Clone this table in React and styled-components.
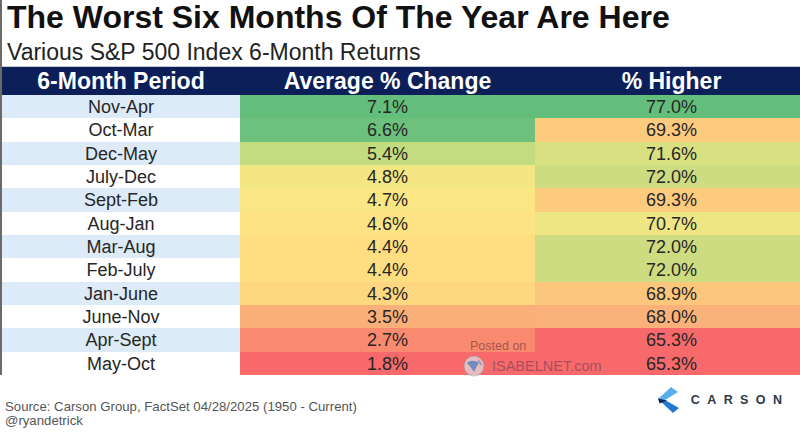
import styled, { createGlobalStyle } from "styled-components";

const GlobalStyle = createGlobalStyle`
  html, body {
    margin: 0;
    padding: 0;
    background: #fff;
  }
  body {
    font-family: "Liberation Sans", Arial, sans-serif;
  }
`;

const Page = styled.div`
  position: relative;
  width: 800px;
  height: 435px;
  overflow: hidden;
  background: #fff;
`;

const Sheet = styled.div`
  border-left: 2px solid #6a6a6a;
`;

const Title = styled.h1`
  margin: 0;
  padding-left: 5px;
  font-size: 32px;
  line-height: 34px;
  font-weight: 700;
  color: #111;
  white-space: nowrap;
`;

const Subtitle = styled.div`
  margin-top: 5px;
  padding-left: 5px;
  height: 27px;
  font-size: 23px;
  line-height: 26px;
  color: #222;
  white-space: nowrap;
`;

const Grid = styled.div`
  display: grid;
  grid-template-columns: 238px 295px 1fr;
`;

const HeaderRow = styled(Grid)`
  height: 29px;
  background: #0c1f59;
  border-top: 1px solid #c9ccd6;
  box-sizing: border-box;
`;

const HeaderCell = styled.div`
  display: flex;
  align-items: center;
  justify-content: center;
  padding-top: 1px;
  padding-left: ${(p) => (p.$shift ? "8px" : "0")};
  font-size: 23px;
  font-weight: 700;
  color: #fff;
  white-space: nowrap;
`;

const Row = styled(Grid)`
  height: 23.33px;
`;

const Cell = styled.div`
  display: flex;
  align-items: center;
  justify-content: center;
  padding-top: 2px;
  padding-left: ${(p) => (p.$shift ? "8px" : "0")};
  box-sizing: border-box;
  font-size: 18px;
  color: #262626;
  background: ${(p) => p.$bg};
`;

const Footer = styled.div`
  display: flex;
  justify-content: space-between;
  align-items: flex-start;
  padding: 12px 18px 0 5px;
`;

const Notes = styled.div`
  margin-top: 13px;
  font-size: 13.2px;
  line-height: 14px;
  color: #555;
`;

const Logo = styled.div`
  display: flex;
  align-items: center;
  gap: 11px;
`;

const LogoText = styled.span`
  font-size: 12.5px;
  font-weight: 700;
  letter-spacing: 7.4px;
  color: #2e3848;
  margin-right: -7.4px;
`;

const Watermark = styled.div`
  position: absolute;
  left: 463px;
  top: 339px;
  display: flex;
  flex-direction: column;
  pointer-events: none;
`;

const Posted = styled.span`
  margin-left: 7px;
  font-size: 12.5px;
  line-height: 14px;
  color: rgba(110, 50, 50, 0.62);
`;

const Brand = styled.div`
  display: flex;
  align-items: center;
  gap: 7px;
  margin-top: 2px;
  font-size: 14.5px;
  color: rgba(90, 55, 85, 0.55);
`;

const rows = [
  ["Nov-Apr", "7.1%", "#63be7b", "77.0%", "#63be7b"],
  ["Oct-Mar", "6.6%", "#6ec17c", "69.3%", "#fdcb7e"],
  ["Dec-May", "5.4%", "#c4dc80", "71.6%", "#d9e081"],
  ["July-Dec", "4.8%", "#f4e683", "72.0%", "#cddc80"],
  ["Sept-Feb", "4.7%", "#fae683", "69.3%", "#fdcb7e"],
  ["Aug-Jan", "4.6%", "#fde383", "70.7%", "#eee684"],
  ["Mar-Aug", "4.4%", "#fede81", "72.0%", "#cddc80"],
  ["Feb-July", "4.4%", "#fede81", "72.0%", "#cddc80"],
  ["Jan-June", "4.3%", "#fed780", "68.9%", "#fdc67d"],
  ["June-Nov", "3.5%", "#fbaf78", "68.0%", "#fbb27a"],
  ["Apr-Sept", "2.7%", "#f98a70", "65.3%", "#f8696b"],
  ["May-Oct", "1.8%", "#f8696b", "65.3%", "#f8696b"],
];

const CarsonMark = () => (
  <svg width="22" height="26" viewBox="0 0 22 26">
    <polygon points="13,0 20,5 7,13 0,12" fill="#58aeec" />
    <polygon points="0,12 7,13 21,21 15,26" fill="#1f79d3" />
    <polygon points="0,11.5 9,13.5 1.5,16.5" fill="#0d2a55" />
  </svg>
);

const Globe = () => (
  <svg width="22" height="22" viewBox="0 0 22 22">
    <circle cx="11" cy="11" r="10" fill="rgba(225,225,230,0.7)" stroke="rgba(150,150,160,0.6)" />
    <path d="M4 8 C7 5 12 5 16 8 C14 10 13 13 11 17 C9 14 7 11 4 8 Z" fill="rgba(60,120,190,0.7)" />
    <path d="M14 4 C17 5 19 8 19 11 C17 10 16 8 14 4 Z" fill="rgba(60,120,190,0.5)" />
  </svg>
);

export default function App() {
  return (
    <Page>
      <GlobalStyle />
      <Sheet>
        <Title>The Worst Six Months Of The Year Are Here</Title>
        <Subtitle>Various S&amp;P 500 Index 6-Month Returns</Subtitle>
        <HeaderRow>
          <HeaderCell>6-Month Period</HeaderCell>
          <HeaderCell>Average % Change</HeaderCell>
          <HeaderCell $shift>% Higher</HeaderCell>
        </HeaderRow>
        {rows.map(([period, avg, avgBg, higher, higherBg], i) => (
          <Row key={period}>
            <Cell $bg={i % 2 === 0 ? "#ddebf8" : "#fff"}>{period}</Cell>
            <Cell $bg={avgBg}>{avg}</Cell>
            <Cell $bg={higherBg} $shift>{higher}</Cell>
          </Row>
        ))}
      </Sheet>
      <Footer>
        <Notes>
          Source: Carson Group, FactSet 04/28/2025 (1950 - Current)
          <br />
          @ryandetrick
        </Notes>
        <Logo>
          <CarsonMark />
          <LogoText>CARSON</LogoText>
        </Logo>
      </Footer>
      <Watermark>
        <Posted>Posted on</Posted>
        <Brand>
          <Globe />
          ISABELNET.com
        </Brand>
      </Watermark>
    </Page>
  );
}
